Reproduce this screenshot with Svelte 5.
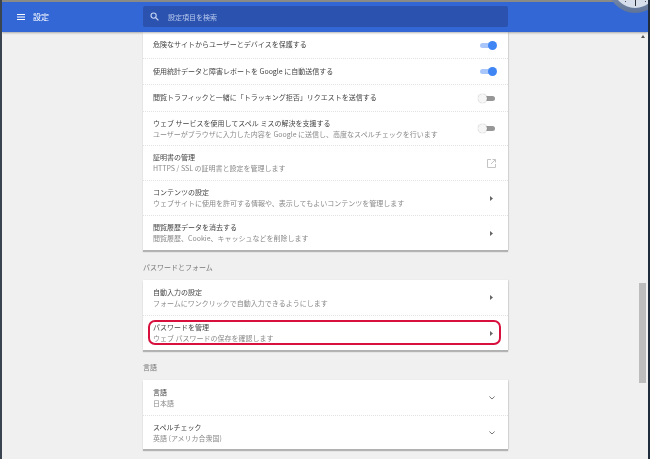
<script lang="ts">
  type Row = { title: string; sub?: string; icon?: string; on?: boolean; h: number; focus?: boolean };

  const privacy: Row[] = [
    { title: '危険なサイトからユーザーとデバイスを保護する', icon: 'toggle', on: true, h: 26 },
    { title: '使用統計データと障害レポートを Google に自動送信する', icon: 'toggle', on: true, h: 26 },
    { title: '閲覧トラフィックと一緒に「トラッキング拒否」リクエストを送信する', icon: 'toggle', on: false, h: 27 },
    { title: 'ウェブ サービスを使用してスペル ミスの解決を支援する', sub: 'ユーザーがブラウザに入力した内容を Google に送信し、高度なスペルチェックを行います', icon: 'toggle', on: false, h: 34 },
    { title: '証明書の管理', sub: 'HTTPS / SSL の証明書と設定を管理します', icon: 'external', h: 35 },
    { title: 'コンテンツの設定', sub: 'ウェブサイトに使用を許可する情報や、表示してもよいコンテンツを管理します', icon: 'arrow', h: 35 },
    { title: '閲覧履歴データを消去する', sub: '閲覧履歴、Cookie、キャッシュなどを削除します', icon: 'arrow', h: 35 }
  ];
  const forms: Row[] = [
    { title: '自動入力の設定', sub: 'フォームにワンクリックで自動入力できるようにします', icon: 'arrow', h: 35 },
    { title: 'パスワードを管理', sub: 'ウェブ パスワードの保存を確認します', icon: 'arrow', h: 35, focus: true }
  ];
  const lang: Row[] = [
    { title: '言語', sub: '日本語', icon: 'chevron', h: 35 },
    { title: 'スペルチェック', sub: '英語 (アメリカ合衆国)', icon: 'chevron', h: 34 }
  ];
  const sections = [
    { rows: privacy },
    { label: 'パスワードとフォーム', rows: forms },
    { label: '言語', rows: lang }
  ];
</script>

<div class="window">
  <header class="topbar">
    <div class="brand">
      <svg class="menu" width="8" height="6" viewBox="0 0 8 6"><path d="M0 0h8v1H0zM0 2.5h8v1H0zM0 5h8v1H0z" fill="#fff" /></svg>
      <span>設定</span>
    </div>
    <div class="search">
      <svg width="9" height="9" viewBox="0 0 9 9"><circle cx="3.6" cy="3.6" r="2.6" fill="none" stroke="#c6d4f2" stroke-width="1.1" /><path d="M5.5 5.5L8.4 8.4" stroke="#c6d4f2" stroke-width="1.2" /></svg>
      <span>設定項目を検索</span>
    </div>
    <div class="clock">
      <div class="face"><i class="hand"></i><i class="tick a"></i><i class="tick b"></i></div>
    </div>
  </header>

  <div class="body">
    <main class="content">
      {#each sections as section}
        {#if section.label}
          <h2>{section.label}</h2>
        {/if}
        <section class="card">
          {#each section.rows as row}
            <div class="row" style="height: {row.h}px">
              <div class="text">
                <div class="title">{row.title}</div>
                {#if row.sub}<div class="sub">{row.sub}</div>{/if}
              </div>
              {#if row.icon === 'toggle'}
                <span class="toggle" class:on={row.on}><i></i></span>
              {:else if row.icon === 'external'}
                <svg class="ico" width="9" height="9" viewBox="0 0 9 9" fill="none" stroke="#c4c4c4"><path d="M4 .5H.5v8h8V5" /><path d="M5.5.5h3v3M8.5.5L4 5" /></svg>
              {:else if row.icon === 'arrow'}
                <svg class="ico arrow" width="3" height="5" viewBox="0 0 3 5"><path d="M0 0l3 2.5L0 5z" fill="#666" /></svg>
              {:else if row.icon === 'chevron'}
                <svg class="ico chev" width="6" height="4" viewBox="0 0 6 4" fill="none" stroke="#777"><path d="M.4.5L3 3l2.6-2.5" /></svg>
              {/if}
              {#if row.focus}<div class="highlight"></div>{/if}
            </div>
          {/each}
        </section>
      {/each}
    </main>
    <div class="scrollbar">
      <span class="up"></span>
      <div class="thumb"></div>
    </div>
  </div>
</div>

<style>
  :global(body) {
    margin: 0;
    background: #f0f0f0;
    overflow: hidden;
  }

  .window {
    width: 650px;
    height: 459px;
    box-sizing: border-box;
    border-left: 2px solid #3a4450;
    border-right: 2px solid #1f2c3c;
    display: flex;
    flex-direction: column;
    overflow: hidden;
    font-family: "Noto Sans CJK JP", "Liberation Sans", sans-serif;
    background: #f0f0f0;
    filter: blur(0.4px);
  }

  .topbar {
    height: 32px;
    flex: none;
    box-sizing: border-box;
    border-top: 2px solid #8a8a86;
    padding-bottom: 1px;
    position: relative;
    display: flex;
    align-items: center;
    background: #3367d6;
    box-shadow: 0 1px 2px rgba(0, 0, 0, 0.3);
    z-index: 2;
  }

  .brand {
    width: 141px;
    display: flex;
    align-items: center;
    gap: 8px;
    padding-left: 15px;
    box-sizing: border-box;
    color: #fff;
    font-size: 8px;
  }

  .search {
    width: 365px;
    height: 21px;
    display: flex;
    align-items: center;
    gap: 9px;
    padding-left: 7px;
    box-sizing: border-box;
    background: #2a52ae;
    border-radius: 2px;
    color: #b9c9ee;
    font-size: 7px;
  }

  .clock {
    position: absolute;
    left: 606px;
    top: -43px;
    width: 54px;
    height: 54px;
    border-radius: 50%;
    background: linear-gradient(#a8b6cc, #5f7498);
    display: flex;
    align-items: center;
    justify-content: center;
  }

  .face {
    width: 44px;
    height: 44px;
    border-radius: 50%;
    background: #d5deea;
    position: relative;
  }

  .hand {
    position: absolute;
    left: 22px;
    top: 34px;
    width: 1px;
    height: 8px;
    background: #2b2f36;
  }

  .tick {
    position: absolute;
    top: 37px;
    width: 1px;
    height: 1px;
    background: #556;
  }

  .tick.a {
    left: 12px;
  }

  .tick.b {
    left: 32px;
  }

  .body {
    flex: 1;
    display: flex;
    min-height: 0;
  }

  .content {
    width: 365px;
    margin-left: 141px;
    flex: none;
  }

  h2 {
    margin: 0;
    height: 30px;
    line-height: 35px;
    font-size: 7px;
    font-weight: 400;
    color: #777;
  }

  .card {
    background: #fff;
    box-shadow: 0 2px 1px rgba(0, 0, 0, 0.25), 1px 0 1px rgba(0, 0, 0, 0.08);
  }

  .row {
    position: relative;
    display: flex;
    align-items: center;
    justify-content: space-between;
    box-sizing: border-box;
    padding: 0 12px 1px 10px;
    border-top: 1px dotted #e2e2e2;
  }

  .row:first-child {
    border-top: 0;
  }

  .title {
    font-size: 7px;
    line-height: 11px;
    color: #444;
  }

  .sub {
    font-size: 7px;
    line-height: 10px;
    color: #8a8a8a;
  }

  .toggle {
    position: relative;
    width: 14px;
    height: 5px;
    margin: 1px 1px 0 0;
    border-radius: 3px;
    background: #979797;
  }

  .toggle i {
    position: absolute;
    left: -3px;
    top: -2px;
    width: 9px;
    height: 9px;
    border-radius: 50%;
    background: #f6f6f6;
    box-shadow: 0 0 1px rgba(0, 0, 0, 0.4);
  }

  .toggle.on {
    background: #a9c6fb;
    margin-right: 2px;
  }

  .toggle.on i {
    left: 8px;
    background: #3f86f4;
    box-shadow: none;
  }

  .ico {
    flex: none;
    margin-top: 1px;
  }

  .arrow {
    margin-right: 3px;
  }

  .chev {
    margin-right: 1px;
  }

  .highlight {
    position: absolute;
    left: 5px;
    right: 7px;
    top: 4px;
    bottom: 5px;
    border: 2px solid #d8103e;
    border-radius: 7px;
    pointer-events: none;
  }

  .scrollbar {
    position: relative;
    flex: 1;
  }

  .up {
    position: absolute;
    left: 133px;
    top: 3px;
    border-left: 2px solid transparent;
    border-right: 2px solid transparent;
    border-bottom: 3px solid #555;
  }

  .thumb {
    position: absolute;
    left: 131px;
    top: 251px;
    width: 7px;
    height: 100px;
    background: #bdbdbd;
  }
</style>
